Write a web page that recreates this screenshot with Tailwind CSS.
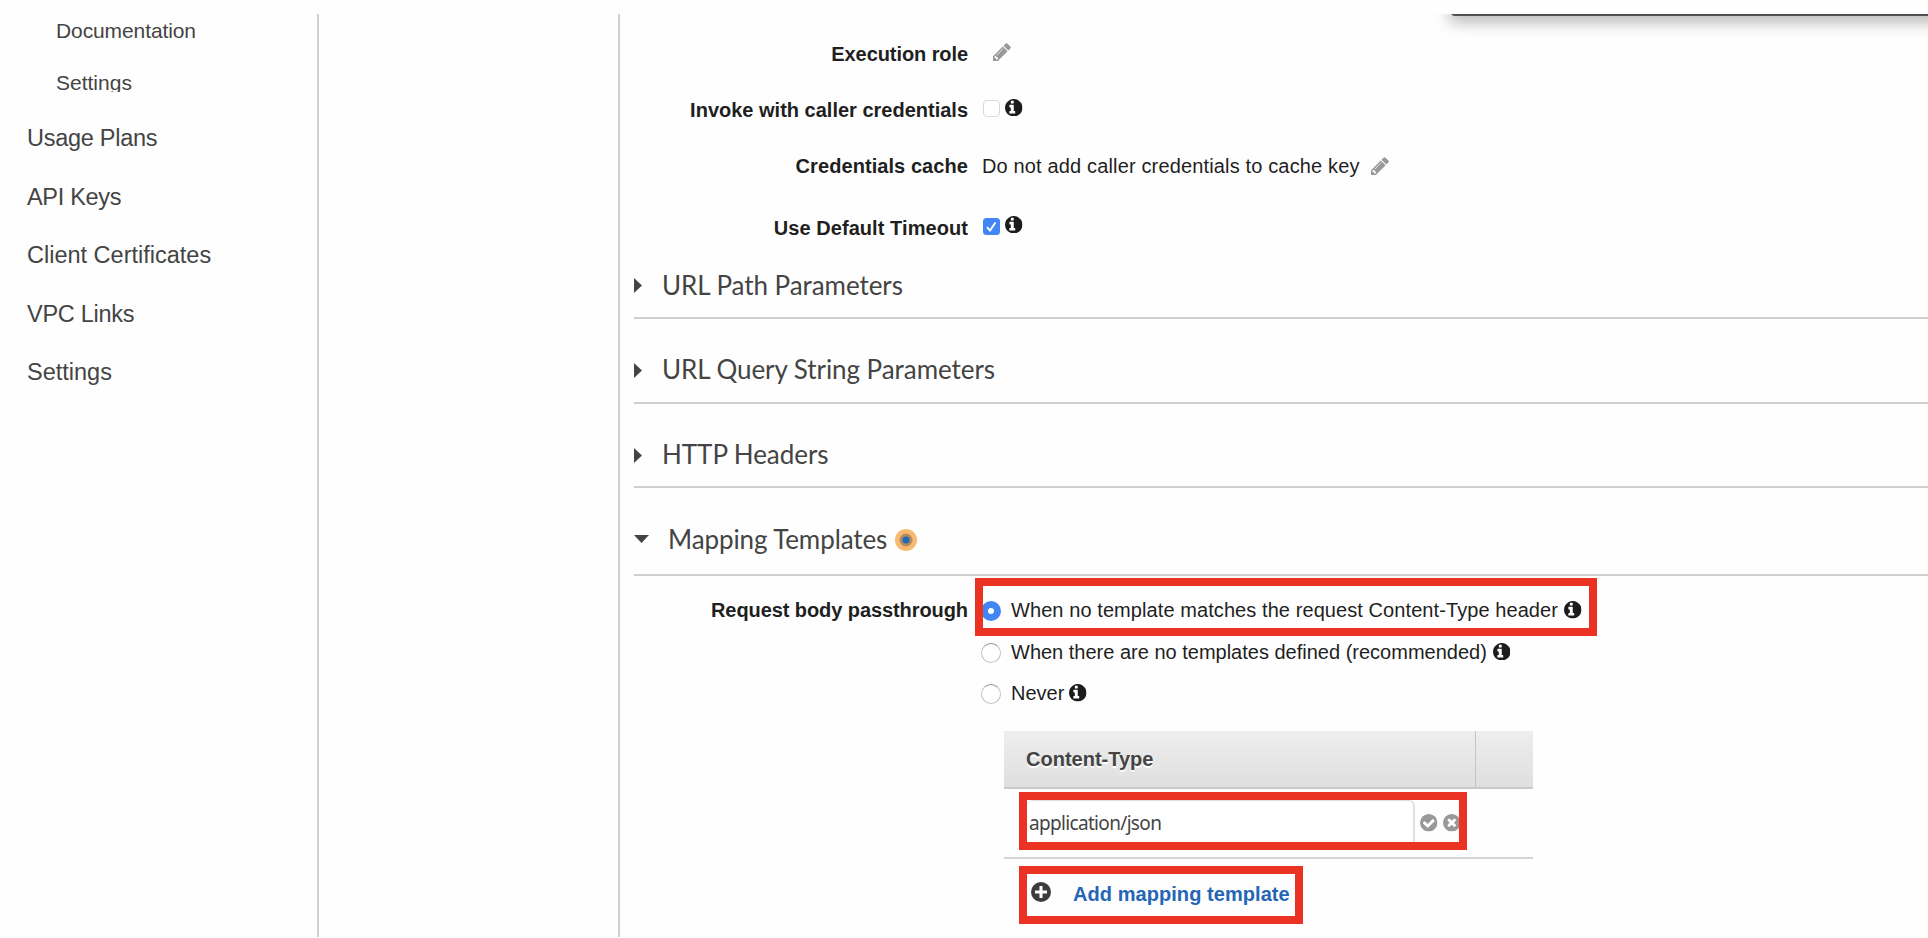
<!DOCTYPE html>
<html lang="en">
<head>
<meta charset="utf-8">
<title>Integration Request</title>
<script src="https://cdn.jsdelivr.net/npm/@tailwindcss/browser@4"></script>
</head>
<body class="bg-[#fefefe] w-[1928px] h-[938px] overflow-hidden font-['Liberation_Sans',Arial,sans-serif] text-[#1f1f1f]">
<svg class="hidden">
  <symbol id="info" viewBox="128 128 1536 1536"><path fill="#1c1c1c" d="M1024 1376v-160q0-14-9-23t-23-9h-96V672q0-14-9-23t-23-9H544q-14 0-23 9t-9 23v160q0 14 9 23t23 9h96v320h-96q-14 0-23 9t-9 23v160q0 14 9 23t23 9h448q14 0 23-9t9-23zM896 480V320q0-14-9-23t-23-9H672q-14 0-23 9t-9 23v160q0 14 9 23t23 9h192q14 0 23-9t9-23zM1664 896q0 209-103 385.500T1281.500 1561 896 1664t-385.500-103T231 1281.500 128 896t103-385.500T510.500 231 896 128t385.500 103T1561 510.500 1664 896z"/></symbol>
  <symbol id="pencil" viewBox="0 0 1536 1536"><path fill="#999" d="M363 1408l91-91-235-235-91 91v107h128v128h107zM886 480q0-22-22-22-10 0-17 7l-542 542q-7 7-7 17 0 22 22 22 10 0 17-7l542-542q7-7 7-17zM832 288l416 416-832 832H0v-416zM1515 384q0 53-37 90l-166 166-416-416 166-165q36-38 90-38 53 0 91 38l235 234q37 39 37 91z"/></symbol>
  <symbol id="check" viewBox="128 128 1536 1536"><circle cx="896" cy="896" r="768" fill="#999"/><path fill="#fff" d="M1412 734q0-28-18-46l-91-90q-19-19-45-19t-45 19l-408 407-226-226q-19-19-45-19t-45 19l-91 90q-18 18-18 46 0 27 18 45l362 362q19 19 45 19 27 0 46-19l543-543q18-18 18-45z"/></symbol>
  <symbol id="times" viewBox="128 128 1536 1536"><circle cx="896" cy="896" r="768" fill="#999"/><path fill="#fff" d="M1277 1122q0-26-19-45L1077 896l181-181q19-19 19-45 0-27-19-46l-90-90q-19-19-46-19-26 0-45 19L896 715 715 534q-19-19-45-19-27 0-46 19l-90 90q-19 19-19 46 0 26 19 45l181 181-181 181q-19 19-19 45 0 27 19 46l90 90q19 19 46 19 26 0 45-19l181-181 181 181q19 19 45 19 27 0 46-19l90-90q19-19 19-46z"/></symbol>
</svg>
<div class="flex h-[937px] pt-3.5">
  <nav class="w-[319px] shrink-0 border-r-2 border-[#d0d0d0] text-[#444]">
    <div class="pl-14 pt-1 text-[21px]">
      <div class="h-[25px] leading-[25px] tracking-[-0.1px]">Documentation</div>
      <div class="mt-7 h-[21px] leading-[24px] overflow-hidden">Settings</div>
    </div>
    <ul class="mt-[17px] pl-[27px] text-[23.5px]">
      <li class="h-[58.5px] leading-[58.5px] tracking-[-0.27px]">Usage Plans</li>
      <li class="h-[58.5px] leading-[58.5px] tracking-[-0.3px]">API Keys</li>
      <li class="h-[58.5px] leading-[58.5px]">Client Certificates</li>
      <li class="h-[58.5px] leading-[58.5px] tracking-[-0.27px]">VPC Links</li>
      <li class="h-[58.5px] leading-[58.5px]">Settings</li>
    </ul>
  </nav>
  <div class="w-[301px] shrink-0 border-r-2 border-[#d0d0d0]"></div>
  <main class="relative w-[1308px] shrink-0 pt-3 pl-3.5 text-[20px]">
    <div class="flex h-14 items-center">
      <div class="w-[334px] text-right font-bold tracking-[-0.08px]">Execution role</div>
      <svg class="ml-[25px] -mt-[5px] size-[18px]"><use href="#pencil"/></svg>
    </div>
    <div class="flex h-14 items-center">
      <div class="w-[334px] text-right font-bold">Invoke with caller credentials</div>
      <span class="ml-[15px] -mt-[3px] size-[17px] rounded-[4px] border border-[#d9d9d9] bg-white"></span>
      <svg class="ml-[5px] -mt-[5px] size-[17.5px]"><use href="#info"/></svg>
    </div>
    <div class="flex h-14 items-center">
      <div class="w-[334px] text-right font-bold tracking-[0.07px]">Credentials cache</div>
      <div class="ml-3.5 tracking-[0.15px]">Do not add caller credentials to cache key</div>
      <svg class="ml-[11px] size-[18px]"><use href="#pencil"/></svg>
    </div>
    <div class="flex h-[68px] items-center">
      <div class="w-[334px] text-right font-bold tracking-[0.07px]">Use Default Timeout</div>
      <svg class="ml-[15px] -mt-1 size-[17px]" viewBox="0 0 17 17"><rect width="17" height="17" rx="3.5" fill="#4285f4"/><path d="M4 9.2 7 12.500 12.500 4.500" fill="none" stroke="#fff" stroke-width="1.9"/></svg>
      <svg class="ml-[5px] -mt-[7px] size-[17.5px]"><use href="#info"/></svg>
    </div>

    <div class="font-[Lato,sans-serif] text-[26px] tracking-[-0.06px] text-[#444]">
      <div class="flex h-[57px] items-center border-b-2 border-[#d0d0d0] pb-[9px]">
        <svg class="mt-0.5 h-4 w-2" viewBox="0 0 8 16"><path d="M0 0 8 7.500 0 15z" fill="#444"/></svg>
        <div class="ml-5">URL Path Parameters</div>
      </div>
      <div class="flex h-[85px] items-center border-b-2 border-[#d0d0d0] pt-[18px]">
        <svg class="mt-0.5 h-4 w-2" viewBox="0 0 8 16"><path d="M0 0 8 7.500 0 15z" fill="#444"/></svg>
        <div class="ml-5">URL Query String Parameters</div>
      </div>
      <div class="flex h-[84px] items-center border-b-2 border-[#d0d0d0] pt-[19px]">
        <svg class="mt-0.5 h-4 w-2" viewBox="0 0 8 16"><path d="M0 0 8 7.500 0 15z" fill="#444"/></svg>
        <div class="ml-5">HTTP Headers</div>
      </div>
      <div class="flex h-[88px] items-center border-b-2 border-[#d0d0d0] pt-4">
        <svg class="h-2 w-[15px]" viewBox="0 0 15 8"><path d="M0 0H15L7.500 8z" fill="#444"/></svg>
        <div class="ml-[19px] tracking-[-0.1px]">Mapping Templates</div>
        <svg class="ml-2 mt-0.5 size-[22px]" viewBox="0 0 22 22"><circle cx="11" cy="11" r="11" fill="#f8ba72"/><circle cx="11" cy="11" r="6.5" fill="#b38b5c"/><circle cx="11" cy="11" r="3.6" fill="#2266bb"/></svg>
      </div>
    </div>

    <div class="flex pt-[13px]">
      <div class="h-[42px] w-[334px] text-right font-bold leading-[42px] tracking-[-0.08px]">Request body passthrough</div>
      <div class="ml-[13px]">
        <div class="flex h-[42px] items-center">
          <svg class="size-5 mt-0.5" viewBox="0 0 20 20"><circle cx="10" cy="10" r="10" fill="#4285f4"/><circle cx="10" cy="10" r="3" fill="#fff"/></svg>
          <span class="ml-[10px] tracking-[0.08px]">When no template matches the request Content-Type header</span>
          <svg class="ml-1.5 size-[17.5px]"><use href="#info"/></svg>
        </div>
        <div class="flex h-[41px] items-center">
          <span class="size-5 mt-0.5 rounded-full border border-[#c2c2c2] border-t-[#9c9c9c] bg-white"></span>
          <span class="ml-[10px]">When there are no templates defined (recommended)</span>
          <svg class="ml-1.5 size-[17.5px]"><use href="#info"/></svg>
        </div>
        <div class="flex h-[42px] items-center">
          <span class="size-5 mt-0.5 rounded-full border border-[#c2c2c2] border-t-[#9c9c9c] bg-white"></span>
          <span class="ml-[10px]">Never</span>
          <svg class="ml-[5px] size-[17.5px]"><use href="#info"/></svg>
        </div>
      </div>
    </div>

    <div class="ml-[370px] mt-[17px] w-[529px]">
      <div class="flex h-[58px] border-b-2 border-[#c9c9c9] bg-linear-to-b from-[#eee] to-[#dfdfdf]">
        <div class="w-[472px] border-r border-[#c4c4c4] pl-[22px] font-bold leading-[57px] text-[#444] [text-shadow:0_2px_0_#fff]">Content-Type</div>
      </div>
      <div class="flex h-[70px] items-center border-b-2 border-[#d4d4d4] pl-[15px] pb-1">
        <div class="flex h-[58px] w-[448px] items-center overflow-hidden border-8 border-[#ea3323]">
          <div class="flex h-full w-[388px] shrink-0 items-center rounded-t-[6px] border-t border-r-2 border-[#dedede] bg-white pl-0.5 pt-[3px] font-['Noto_Sans',sans-serif] text-[19px] tracking-[-0.67px] text-[#444]">application/json</div>
          <svg class="ml-[5px] mt-1 size-[17.5px] shrink-0"><use href="#check"/></svg>
          <svg class="ml-[5.5px] mt-1 size-[17.5px] shrink-0"><use href="#times"/></svg>
        </div>
      </div>
      <div class="ml-[15px] mt-[7px] flex h-[58px] w-[284px] items-center border-8 border-[#ea3323]">
        <svg class="-mt-1.5 ml-1 size-5" viewBox="0 0 20 20"><circle cx="10" cy="10" r="10" fill="#3c3c3c"/><path d="M10 4v12M4 10h12" stroke="#fff" stroke-width="3"/></svg>
        <a class="ml-[22px] -mt-[3px] whitespace-nowrap font-bold tracking-[0.06px] text-[#2465b5]">Add mapping template</a>
      </div>
    </div>
    <div class="absolute left-[355px] top-[564px] h-[58px] w-[622px] border-8 border-[#ea3323]"></div>
    <div class="absolute left-[800px] top-0 h-10 w-[508px] overflow-hidden">
      <div class="absolute -top-2 left-[31px] h-[10px] w-[500px] rounded-b-[4px] bg-[#504e50] shadow-[0_3px_16px_2px_rgba(0,0,0,0.35)]"></div>
    </div>
  </main>
</div>
</body>
</html>
